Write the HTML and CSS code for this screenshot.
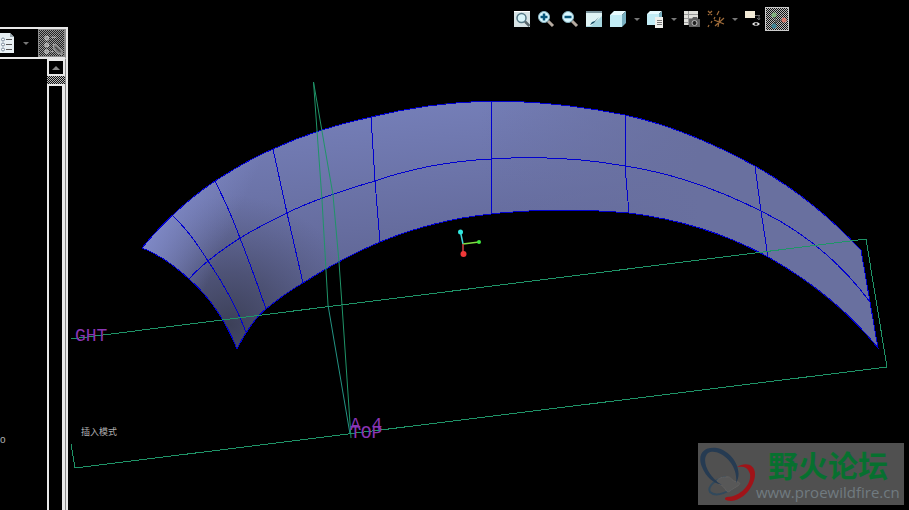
FILE: index.html
```
<!DOCTYPE html>
<html lang="zh">
<head>
    <meta charset="utf-8">
    <title>Surface Model</title>
    <link rel="stylesheet" href="styles.css">
</head>
<body>

<div class="app">
    <aside class="tree">
        <div class="tree-bar">
            <button class="tree-tool" aria-label="Tree settings">
                <svg width="14" height="20" viewBox="0 0 14 20">
                    <path d="M0 0H10L14 4V20H0Z" fill="#e8f0f4"/>
                    <path d="M10 0V4H14Z" fill="#9aa8ae"/>
                    <path d="M6 6.500H12M6 11.500H12M6 16.500H12" stroke="#555"/>
                    <circle cx="3" cy="6.500" r="1.500" fill="#fff" stroke="#789"/>
                    <circle cx="3" cy="11.500" r="1.500" fill="#fff" stroke="#789"/>
                    <circle cx="3" cy="16.500" r="1.500" fill="#fff" stroke="#789"/>
                </svg>
            </button>
            <button class="arrow" aria-label="More settings"></button>
            <button class="tree-toggle checker" aria-label="Show tree">
                <svg width="26" height="27" viewBox="0 0 26 27">
                    <g fill="#999" stroke="#ccc">
                        <circle cx="8" cy="8" r="2"/>
                        <circle cx="8" cy="15" r="2"/>
                        <circle cx="8" cy="22" r="2"/>
                    </g>
                    <path d="M13 7H18M12 22H15" stroke="#bbb"/>
                    <path d="M15 14L18 15L21 18L24 20V25L18 23L15 18Z" fill="#777" stroke="#aaa"/>
                    <path d="M17 17L22 22M20 15L23 18" stroke="#222"/>
                </svg>
            </button>
        </div>
        <div class="tree-body">
            <div class="tree-list"><span class="tree-item">o</span></div>
            <div class="scroll">
                <button class="scroll-up" aria-label="Scroll up"></button>
                <div class="scroll-track checker"></div>
                <div class="scroll-thumb"></div>
            </div>
        </div>
    </aside>

    <main class="view">
        <svg class="model" viewBox="68 0 841 510" preserveAspectRatio="xMinYMin meet">
            <defs>
                <linearGradient id="shade" gradientUnits="userSpaceOnUse" x1="440" y1="90" x2="465" y2="350">
                    <stop offset="0" stop-color="#7680ba"/>
                    <stop offset="0.500" stop-color="#666d9f"/>
                    <stop offset="1" stop-color="#545982"/>
                </linearGradient>
                <linearGradient id="right" gradientUnits="userSpaceOnUse" x1="480" y1="0" x2="700" y2="0">
                    <stop offset="0" stop-color="#69709f" stop-opacity="0"/>
                    <stop offset="1" stop-color="#69709f"/>
                </linearGradient>
                <linearGradient id="left" gradientUnits="userSpaceOnUse" x1="150" y1="230" x2="218" y2="260">
                    <stop offset="0" stop-color="#7f89c6"/>
                    <stop offset="1" stop-color="#7f89c6" stop-opacity="0"/>
                </linearGradient>
                <radialGradient id="dark" gradientUnits="userSpaceOnUse" cx="230" cy="325" r="130">
                    <stop offset="0" stop-color="#3c4058"/>
                    <stop offset="0.400" stop-color="#454967" stop-opacity="0.700"/>
                    <stop offset="1" stop-color="#50557a" stop-opacity="0"/>
                </radialGradient>
                <path id="surface" d="M142 248C158 228 185 201 215 181C232 170 252 158 273 149C305 134 338 124 371 117C411 107 450 102 491 101C536 101 581 106 625 115C671 125 713 143 755 166C791 186 829 216 861 250L878 348C849 312 809 280 768 257C723 232 676 219 629 213C583 209 535 209 491 214C453 218 414 228 380 242C354 253 328 267 303 283C289 291 277 300 266 309C257 316 245 332 237 349C227 324 212 299 189 279C175 266 160 255 142 248Z"/>
            </defs>
            <use href="#surface" fill="url(#shade)"/>
            <use href="#surface" fill="url(#right)"/>
            <use href="#surface" fill="url(#dark)"/>
            <use href="#surface" fill="url(#left)"/>
            <g class="curves">
                <use href="#surface"/>
                <path d="M189 279C200 266 214 255 240 238C255 229 270 221 287 213C315 199 344 190 375 181C412 168 452 161 491 159C536 156 581 158 625 166C672 173 717 189 761 211C804 232 841 263 870 302"/>
                <path d="M172 215C183 225 195 240 208 261C224 284 236 306 246 332M215 181C223 197 232 216 240 238C249 261 258 286 266 309M273 149L287 213L303 283M371 117L375 181L380 242M491 101V214M625 115L625 166L629 213M755 166L761 211L768 257"/>
            </g>
            <path class="datum" d="M71 339L866 239L887 367L75 468L71 444"/>
            <path class="datum-side" d="M328 305L322 200L313.500 82L333 195L339 262L342 305L351 438"/>
            <path class="datum-cut" d="M328 305L350 434"/>

            <text class="label" x="75" y="341">GHT</text>
            <text class="label" x="350" y="430">A 4</text>
            <text class="label" x="350" y="438">TOP</text>

            <g fill="none" stroke-width="1.500">
                <path d="M460.500 232L463 244" stroke="#40d8d8"/>
                <path d="M463 244L479 242" stroke="#80e040"/>
                <path d="M463 244V254" stroke="#d04040"/>
            </g>
            <circle cx="460.500" cy="232" r="2.500" fill="#30e8e0"/>
            <circle cx="479" cy="242" r="2" fill="#40e840"/>
            <circle cx="463.500" cy="254" r="3" fill="#f03838"/>
        </svg>

        <div class="toolbar">
            <button aria-label="Refit">
                <svg width="18" height="18" viewBox="0 0 18 18">
                    <path d="M1 1H17V17H1Z" fill="#d8e4e6"/>
                    <path d="M1 1.500H17" stroke="#fff"/>
                    <circle cx="8.500" cy="8" r="4.500" fill="#d9f5fa" stroke="#567987" stroke-width="1.500"/>
                    <path d="M12 11.500L16.500 16" stroke="#59676c" stroke-width="2.500"/>
                </svg>
            </button>
            <button aria-label="Zoom in">
                <svg width="18" height="18" viewBox="0 0 18 18">
                    <path d="M11 11L16 16" stroke="#b5aaa0" stroke-width="3"/>
                    <circle cx="7" cy="7" r="5.500" fill="#d9f8ff" stroke="#86b2c0"/>
                    <path d="M7 3.500V10.500M3.500 7H10.500" stroke="#075579" stroke-width="2.500"/>
                </svg>
            </button>
            <button aria-label="Zoom out">
                <svg width="18" height="18" viewBox="0 0 18 18">
                    <path d="M11 11L16 16" stroke="#b5aaa0" stroke-width="3"/>
                    <circle cx="7" cy="7" r="5.500" fill="#d9f8ff" stroke="#86b2c0"/>
                    <path d="M3.500 7H10.500" stroke="#075579" stroke-width="2.500"/>
                </svg>
            </button>
            <button aria-label="Repaint">
                <svg width="18" height="18" viewBox="0 0 18 18">
                    <path d="M1 1H17V17H1Z" fill="#a5d5de"/>
                    <path d="M1 3H17V6L6 16H1Z" fill="#dff3f5"/>
                    <path d="M1 2H17" stroke="#79919a" stroke-width="2"/>
                    <path d="M14 7L9 13L5 15L7 12L10 11Z" fill="#174e64"/>
                </svg>
            </button>
            <button aria-label="Display style">
                <svg width="18" height="18" viewBox="0 0 18 18">
                    <path d="M1 5L5 1H17L13 5Z" fill="#e8fbff"/>
                    <path d="M1 5H13V17H1Z" fill="#c2ecf5"/>
                    <path d="M13 5L17 1V13L13 17Z" fill="#78afc0"/>
                </svg>
            </button>
            <button class="arrow" aria-label="Display style list"></button>
            <button aria-label="Saved views">
                <svg width="18" height="18" viewBox="0 0 18 18">
                    <path d="M1 4L4 1H16L13 4Z" fill="#e8fbff"/>
                    <path d="M1 4H13V15H1Z" fill="#c2ecf5"/>
                    <path d="M13 4L16 1V12L13 15Z" fill="#78afc0"/>
                    <path d="M9 7H17V18H9Z" fill="#f0f0ec"/>
                    <path d="M11 10.500H16M11 12.500H16M11 14.500H16" stroke="#777"/>
                </svg>
            </button>
            <button class="arrow" aria-label="Saved views list"></button>
            <button aria-label="View manager">
                <svg width="18" height="18" viewBox="0 0 18 18">
                    <path d="M1 1H15V15H1Z" fill="#e2e2dd"/>
                    <path d="M1 4.500H15M1 8.500H15M1 12.500H15M5.500 1V15" stroke="#999"/>
                    <path d="M6 9H9L10 7H14L15 9H17V17H6Z" fill="#606060"/>
                    <circle cx="11.500" cy="13" r="2.500" fill="#222" stroke="#bbb"/>
                </svg>
            </button>
            <button aria-label="Datum display">
                <svg width="18" height="18" viewBox="0 0 18 18">
                    <path d="M1 1L5 5M5 1L1 5M12 1L10 5M8 7L7 9M5 11L4 13M2 15L1 17M13 7L11 17M7 10L17 14M17 8L8 16" fill="none" stroke="#a06c3a" stroke-width="1.200"/>
                </svg>
            </button>
            <button class="arrow" aria-label="Datum display list"></button>
            <button aria-label="Annotation display">
                <svg width="18" height="18" viewBox="0 0 18 18">
                    <path d="M1 1H11V8H1Z" fill="#f2ead6"/>
                    <path d="M11 5.500H16M15 5V9M13 8L15 10L16 8" fill="none" stroke="#666"/>
                    <path d="M8 14Q12 10 16 14Q12 18 8 14Z" fill="#eee"/>
                    <circle cx="12" cy="14" r="1.500" fill="#222"/>
                </svg>
            </button>
            <button class="spin checker" aria-label="Spin center">
                <svg width="22" height="22" viewBox="0 0 22 22">
                    <path d="M8 8L10 13L18 12M10 13L8 18" fill="none" stroke="#555"/>
                    <circle cx="8" cy="7" r="2.500" fill="#80b07c"/>
                    <circle cx="18" cy="12" r="2.500" fill="#d2786b"/>
                    <circle cx="8" cy="18" r="2.500" fill="#3f8294"/>
                </svg>
            </button>
        </div>

        <p class="status">插入模式</p>

        <div class="watermark">
            <svg width="58" height="58" viewBox="0 0 58 58" fill="none">
                <path d="M39 22C47 17 57 19 57 29C57 42 44 56 33 56C27 56 25 53 29 52C42 52 54 39 52 29C50 22 45 21 39 22Z" fill="#a01318"/>
                <path d="M28 32C17 34 9 42 12 47C17 52 27 48 34 44" stroke="#31495c" stroke-width="2"/>
                <path d="M28 32C21 32 16 36 21 39C29 42 27 49 32 46C35 43 46 39 40 37C31 36 35 31 28 32Z" fill="#585858" stroke="#626262"/>
                <path fill-rule="evenodd" d="M38 38C46 25 34 6 19 3C5 1 -1 10 4 22C8 32 15 38 24 40C9 31 3 14 10 8C20 2 41 18 38 38Z" fill="#263b52"/>
            </svg>
            <div class="watermark-text">
                <strong>野火论坛</strong>
                <a href="#">www.proewildfire.cn</a>
            </div>
        </div>
    </main>
</div>

</body>
</html>
```
FILE: styles.css
```
:root {
    --line: #e8e8e8;
    --grey: #8c8c8c;
    --datum: #1f9468;
}

* {
    box-sizing: border-box;
}

body {
    background: #000;
    color: #b0b0b0;
    font-family: "Liberation Sans", "Noto Sans CJK SC", sans-serif;
    margin: 0;
    overflow: hidden;
}

button {
    display: flex;
    align-items: center;
    justify-content: center;
    background: transparent;
    border: 0;
    padding: 0;
    flex: none;
    cursor: pointer;
}

.app {
    display: flex;
    height: 100vh;
}

.checker {
    background: repeating-conic-gradient(#bdbdbd 0% 25%, #111 0% 50%) 0 0 / 2px 2px;
}

.arrow::before {
    content: "";
    border: 3px solid transparent;
    border-top-color: #777;
    border-bottom: 0;
}

/* model tree */
.tree {
    display: flex;
    flex-direction: column;
    width: 68px;
    flex: none;
    margin-top: 27px;
    border-top: 2px solid var(--line);
    border-right: 2px solid var(--line);
}

.tree-bar {
    display: flex;
    align-items: center;
    height: 30px;
    border-bottom: 2px solid var(--line);
    border-right: 1px solid var(--grey);
}

.tree-tool {
    width: 14px;
}

.tree-bar .arrow {
    flex: 1;
}

.tree-toggle {
    width: 27px;
    height: 28px;
    border: 1px solid var(--grey);
}

.tree-toggle.checker {
    background-image: repeating-conic-gradient(#999 0% 25%, #222 0% 50%);
}

.tree-body {
    display: flex;
    flex: 1;
    border-right: 1px solid var(--grey);
}

.tree-list {
    flex: 1;
    display: flex;
    align-items: flex-end;
    padding-bottom: 64px;
}

.tree-item {
    font-size: 10px;
    line-height: 12px;
}

.scroll {
    display: flex;
    flex-direction: column;
    width: 18px;
}

.scroll-up {
    height: 17px;
    border: 2px solid var(--line);
}

.scroll-up::before {
    content: "";
    border: 4px solid transparent;
    border-bottom-color: #888;
    border-top: 0;
}

.scroll-track {
    height: 8px;
}

.scroll-thumb {
    flex: 1;
    border: 2px solid var(--line);
    border-right-width: 3px;
    border-bottom: 0;
}

/* graphics window */
.view {
    position: relative;
    flex: 1;
    min-width: 0;
}

.model {
    display: block;
    width: 100%;
    height: 100%;
}

.curves {
    fill: none;
    stroke: #0000d0;
    shape-rendering: crispEdges;
}

.curves use {
    fill: none;
    stroke-width: 1px;
}

.datum {
    fill: none;
    stroke: var(--datum);
    shape-rendering: crispEdges;
}

.datum-side {
    fill: none;
    stroke: var(--datum);
}

.datum-cut {
    fill: none;
    stroke: #239383;
}

.label {
    font-family: "Liberation Mono", monospace;
    font-size: 18px;
    fill: #8a35b4;
}

.toolbar {
    position: absolute;
    top: 7px;
    right: 120px;
    display: flex;
    align-items: center;
    gap: 6px;
}

.toolbar .arrow {
    width: 7px;
    height: 18px;
}

.toolbar .spin {
    width: 24px;
    height: 24px;
    margin-left: -3px;
    border: 1px solid #ccc;
}

.status {
    position: absolute;
    left: 13px;
    bottom: 70px;
    margin: 0;
    font-family: "Noto Sans CJK SC", sans-serif;
    font-size: 9px;
    line-height: 16px;
}

.watermark {
    position: absolute;
    right: 5px;
    bottom: 5px;
    display: flex;
    align-items: center;
    width: 206px;
    height: 62px;
    background: #505050;
}

.watermark-text strong {
    display: block;
    padding-left: 12px;
    font-family: "Noto Sans CJK SC", sans-serif;
    font-size: 30px;
    font-weight: 700;
    line-height: 36px;
    color: #07702f;
}

.watermark-text a {
    display: block;
    font-family: "Open Sans", sans-serif;
    font-size: 15px;
    line-height: 20px;
    color: #717b80;
    text-decoration: none;
}
```
